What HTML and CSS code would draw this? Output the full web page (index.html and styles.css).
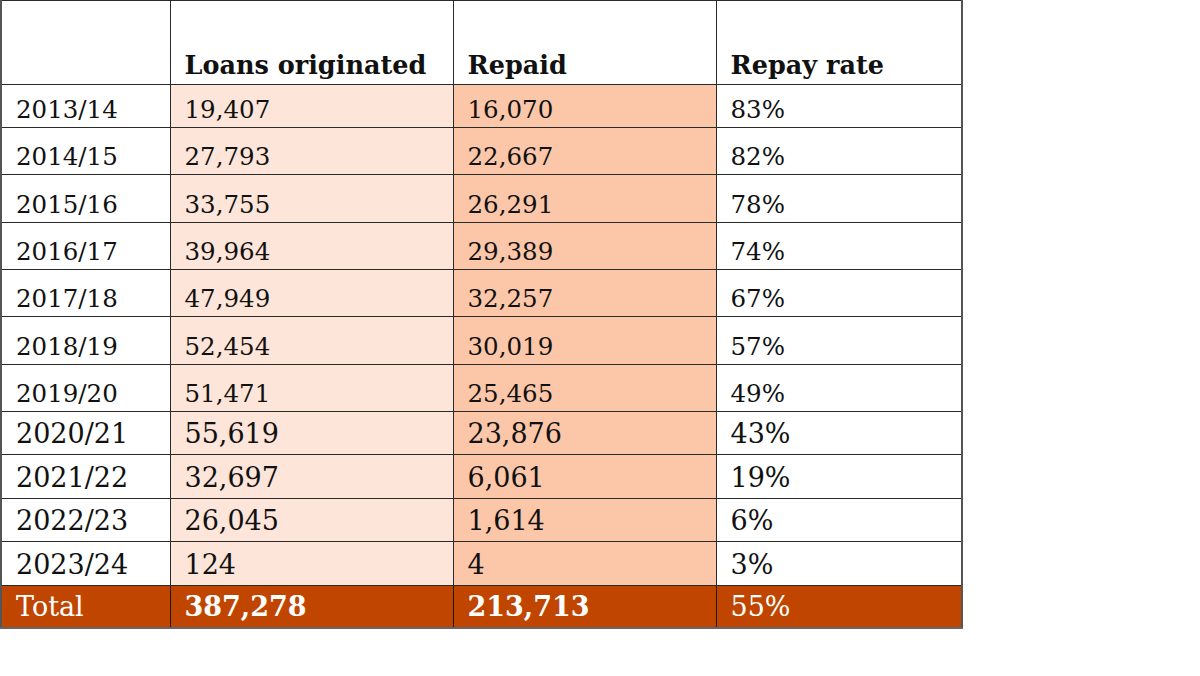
FILE: index.html
```html
<!DOCTYPE html>
<html>
<head>
<meta charset="utf-8">
<link rel="stylesheet" href="styles.css">
</head>
<body>
<table class="loans">
  <colgroup>
    <col class="c-year"><col class="c-orig"><col class="c-rep"><col class="c-rate">
  </colgroup>
  <thead>
    <tr class="head">
      <th></th>
      <th>Loans originated</th>
      <th>Repaid</th>
      <th>Repay rate</th>
    </tr>
  </thead>
  <tbody>
    <tr class="old first"><td>2013/14</td><td class="orig">19,407</td><td class="rep">16,070</td><td>83%</td></tr>
    <tr class="old"><td>2014/15</td><td class="orig">27,793</td><td class="rep">22,667</td><td>82%</td></tr>
    <tr class="old"><td>2015/16</td><td class="orig">33,755</td><td class="rep">26,291</td><td>78%</td></tr>
    <tr class="old"><td>2016/17</td><td class="orig">39,964</td><td class="rep">29,389</td><td>74%</td></tr>
    <tr class="old"><td>2017/18</td><td class="orig">47,949</td><td class="rep">32,257</td><td>67%</td></tr>
    <tr class="old"><td>2018/19</td><td class="orig">52,454</td><td class="rep">30,019</td><td>57%</td></tr>
    <tr class="old"><td>2019/20</td><td class="orig">51,471</td><td class="rep">25,465</td><td>49%</td></tr>
    <tr class="new"><td>2020/21</td><td class="orig">55,619</td><td class="rep">23,876</td><td>43%</td></tr>
    <tr class="new"><td>2021/22</td><td class="orig">32,697</td><td class="rep">6,061</td><td>19%</td></tr>
    <tr class="new"><td>2022/23</td><td class="orig">26,045</td><td class="rep">1,614</td><td>6%</td></tr>
    <tr class="new"><td>2023/24</td><td class="orig">124</td><td class="rep">4</td><td>3%</td></tr>
    <tr class="new total"><td>Total</td><td class="strong">387,278</td><td class="strong">213,713</td><td>55%</td></tr>
  </tbody>
</table>
</body>
</html>
```

FILE: styles.css
```css
html, body {
  margin: 0;
  padding: 0;
  background: #ffffff;
}

.loans {
  border-collapse: collapse;
  table-layout: fixed;
  width: 963px;
  font-family: "DejaVu Serif", "Liberation Serif", serif;
  color: #111111;
  border-top: 1px solid #555555;
  border-left: 2px solid #555555;
  border-right: 2px solid #555555;
  border-bottom: 2px solid #666666;
}

.c-year { width: 169px; }
.c-orig { width: 283px; }
.c-rep { width: 263px; }
.c-rate { width: 246px; }

.loans th,
.loans td {
  border: 1px solid #2a2a2a;
  padding: 0 0 0 14px;
  text-align: left;
  vertical-align: bottom;
  white-space: nowrap;
  overflow: hidden;
}

.head th {
  height: 84px;
  font-size: 25.5px;
  font-weight: bold;
  padding-bottom: 4px;
  box-sizing: border-box;
}

.old td {
  height: 47.33px;
  font-size: 24.5px;
  padding-bottom: 3px;
  box-sizing: border-box;
  font-variant-numeric: oldstyle-nums;
}

.old.first td {
  height: 43px;
}

.new td {
  height: 43.4px;
  font-size: 27px;
  padding-bottom: 5px;
  box-sizing: border-box;
}

.orig { background: #fde5d9; }
.rep { background: #fcc6a9; }

.total td {
  background: #c04600;
  color: #ffffff;
  border-color: #1a1a1a;
}

.total .strong {
  font-weight: bold;
}
```
